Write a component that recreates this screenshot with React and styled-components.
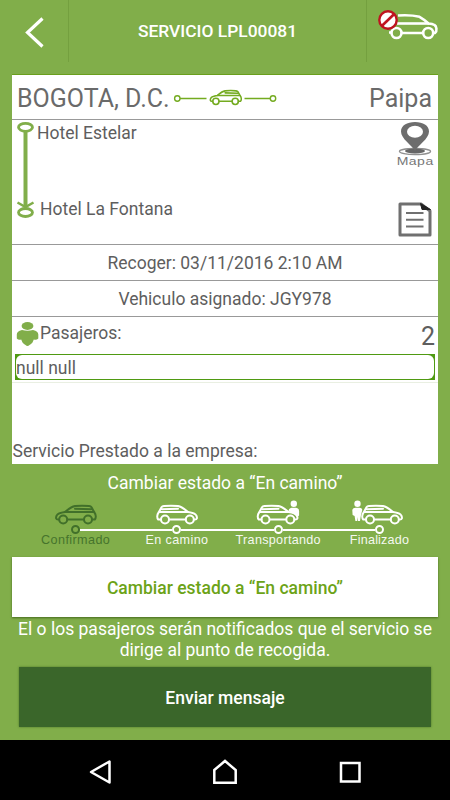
import React from "react";
import styled, { createGlobalStyle } from "styled-components";

const GlobalStyle = createGlobalStyle`
  * {
    box-sizing: border-box;
  }
  body {
    margin: 0;
    background-color: #81ae4a;
    font-family: Roboto, "Liberation Sans", sans-serif;
  }
  svg {
    display: block;
    overflow: visible;
    flex-shrink: 0;
  }
`;

const Container = styled.div`
  width: 450px;
  height: 800px;
  display: flex;
  flex-direction: column;
  background-color: #81ae4a;
  color: #5e5e5e;
  font-size: 17.5px;
  overflow: hidden;
`;
const Header = styled.header`
  height: 62px;
  display: flex;
  align-items: stretch;
`;
const HeaderSide = styled.div`
  width: ${(props) => props.$width}px;
  padding: ${(props) => props.$padding};
`;
const Title = styled.h1`
  flex: 1;
  margin: 0;
  border: solid #74a03f;
  border-width: 0 1px;
  line-height: 63px;
  text-align: center;
  font-size: 17.4px;
  font-weight: 500;
  color: #fff;
`;
const Card = styled.section`
  height: 389px;
  margin: 13px 12px 0;
  background-color: #fff;
  box-shadow: 0 -1px 0 #6a9f1c;
`;
const Cities = styled.div`
  height: 45px;
  display: flex;
  align-items: center;
  padding: 2px 6px 0 5px;
  border-bottom: 1px solid #999;
  font-size: 25px;
  color: #6a6a6a;
`;
const Origin = styled.span`
  width: 155px;
  white-space: nowrap;
`;
const Destination = styled.span`
  margin-left: auto;
`;
const Route = styled.div`
  height: 125px;
  display: flex;
  padding: 1px 4px 0 4px;
  border-bottom: 1px solid #999;
`;
const Stops = styled.div`
  flex: 1;
  height: 100px;
  display: flex;
  flex-direction: column;
  justify-content: space-between;
  padding-left: 3px;
  line-height: 24px;
`;
const Stop = styled.span`
  padding-left: ${(props) => props.$indent || 0}px;
`;
const Actions = styled.div`
  width: 38px;
  display: flex;
  flex-direction: column;
  align-items: center;
`;
const MapLabel = styled.span`
  height: 12px;
  margin-bottom: 35px;
  line-height: 13px;
  font-family: "Liberation Sans", Arial, sans-serif;
  font-size: 11.5px;
  letter-spacing: 0.4px;
  color: #777;
  transform: scaleX(1.22);
`;
const InfoRow = styled.div`
  height: 36px;
  line-height: 36px;
  border-bottom: 1px solid #999;
  text-align: center;
`;
const Passengers = styled.div`
  height: 36px;
  display: flex;
  align-items: center;
  padding: 0 3px 0 4px;
`;
const PassengersLabel = styled.span`
  padding-bottom: 4px;
`;
const Count = styled.span`
  margin-left: auto;
  padding-top: 2px;
  font-size: 25px;
`;
const PassengerFrame = styled.div`
  height: 26px;
  margin: 1px 3px 0;
  padding: 1px;
  background-color: #4f9a12;
`;
const Passenger = styled.div`
  height: 24px;
  border-radius: 6px;
  background-color: #fff;
  line-height: 26px;
`;
const Divider = styled.div`
  height: 3px;
  border-bottom: 1px solid #e9efe2;
`;
const Company = styled.div`
  padding: 56px 0 0 0.5px;
  line-height: 24px;
`;
const StatusTitle = styled.div`
  height: 37px;
  line-height: 38px;
  text-align: center;
  color: #fff;
`;
const Steps = styled.div`
  height: 56px;
  display: grid;
  grid-template-columns: repeat(4, 101.3px);
  margin-left: 25px;
`;
const Step = styled.div`
  display: flex;
  flex-direction: column;
  align-items: center;
  padding-top: 4px;
  color: ${(props) => (props.$current ? "#41702a" : "#fff")};
`;
const Rail = styled.div`
  width: 100%;
  height: 9px;
  display: flex;
  align-items: center;
`;
const Line = styled.span`
  flex: 1;
  height: 2px;
  background-color: ${(props) => (props.$hidden ? "transparent" : "#fff")};
`;
const Dot = styled.span`
  width: 9px;
  height: 9px;
  border: 2px solid currentColor;
  border-radius: 50%;
`;
const StepLabel = styled.span`
  line-height: 13px;
  white-space: nowrap;
  font-family: "Liberation Sans", Arial, sans-serif;
  font-size: 12.6px;
  letter-spacing: ${(props) => props.$spacing}px;
  opacity: 0.92;
`;
const ChangeButton = styled.button`
  height: 60px;
  margin: 0 12px;
  padding: 1px 0 0;
  border: none;
  background-color: #fff;
  box-shadow: 0 1px 2px rgba(30, 60, 0, 0.6);
  font-family: inherit;
  font-size: 17.5px;
  font-weight: 500;
  color: #6ca318;
`;
const Notice = styled.p`
  height: 50px;
  margin: 0;
  padding: 2px 12px 0;
  text-align: center;
  line-height: 20.5px;
  color: #fff;
`;
const SendButton = styled.button`
  height: 60px;
  margin: 0 19px 13px;
  padding: 1px 0 0;
  border: none;
  background-color: #3a662a;
  box-shadow: 0 0 2px rgba(40, 80, 20, 0.6);
  font-family: inherit;
  font-size: 17.5px;
  font-weight: 500;
  color: #fff;
`;
const NavBar = styled.nav`
  height: 60px;
  display: flex;
  justify-content: space-between;
  align-items: center;
  padding: 4px 88px 0;
  background-color: #000;
`;

// the car looks to the right, $flip turns it round
const CarShape = ({ flip, stroke = 2 }) => (
  <g
    transform={flip ? "translate(42 0) scale(-1 1)" : undefined}
    fill="none"
    stroke="currentColor"
    strokeWidth={stroke}
    strokeLinejoin="round"
    strokeLinecap="round"
  >
    <path d="M5 14.5H2.2C.8 13 .9 9.500 2.600 7.500L5.500 2.300Q6.200 1.300 8 1.100 15 .4 22 1.100C26 1.800 29 4.500 32 7 36 7.500 39.500 8.500 40.300 10.500 41.500 13 41 14.500 39 14.500H38" />
    <path d="M13.500 14.500H29.500M3.500 7H32M5.800 4.200L22 3.700" />
    <circle cx="9" cy="14.500" r="4" />
    <circle cx="33.800" cy="14.500" r="4" />
  </g>
);

const steps = [
  { label: "Confirmado", spacing: 0.4, flip: true, shift: 0 },
  { label: "En camino", spacing: 0.4, shift: 0 },
  { label: "Transportando", spacing: 0.3, shift: -0.5, person: "front" },
  { label: "Finalizado", spacing: 0.2, shift: 2, person: "back" },
];

const StepCar = ({ step }) => (
  <svg width="42" height="20" viewBox="0 0 42 20">
    <g transform={`translate(${step.shift} 0)`}>
      <CarShape flip={step.flip} />
      {step.person === "front" && (
        <g fill="currentColor">
          <circle cx="37.300" cy="-1.200" r="3.200" />
          <path d="M32 6Q32.500 3 35 2.700H39.500Q42.500 3 42.600 6V10.500L40.500 12 37 8.500Z" />
        </g>
      )}
      {step.person === "back" && (
        <g fill="currentColor">
          <circle cx="-3.500" cy="-1.200" r="3.200" />
          <path d="M-8.700 5Q-8 2.700-5.500 2.700H-1.500Q1 2.700 1.300 5L0 10-1 16H-3.200L-3.600 12-4 16H-5.600L-6.400 11-8.400 10Z" />
        </g>
      )}
    </g>
  </svg>
);

const App = () => {
  return (
    <>
      <GlobalStyle />
      <Container>
        <Header>
          <HeaderSide $width={68} $padding="17px 0 0 25px">
            <svg width="20" height="32" viewBox="0 0 20 32">
              <path d="M17.500 1.500L2.500 15.500L17.500 29.500" fill="none" stroke="#fff" strokeWidth="3.200" />
            </svg>
          </HeaderSide>
          <Title>SERVICIO LPL00081</Title>
          <HeaderSide $width={83} $padding="8px 0 0 10px">
            <svg width="62" height="34" viewBox="0 0 62 34">
              <g fill="none" stroke="#fff" strokeWidth="2.600" strokeLinejoin="round">
                <path d="M12 24.500H14.500M24.500 25H46M56 25H58C60.500 23 59.500 18 57.500 17Q55.500 15.800 51.500 15.500Q46.500 11 42.500 8.800Q34 6.700 21 7.500" />
                <path d="M20 15.500H52" />
                <circle cx="19.500" cy="25" r="5" />
                <circle cx="51.200" cy="25" r="5" />
              </g>
              <circle cx="11" cy="12" r="8.700" fill="#fff" stroke="#bf1420" strokeWidth="2.400" />
              <path d="M5 17.700L17 6.300" stroke="#bf1420" strokeWidth="2.600" />
            </svg>
          </HeaderSide>
        </Header>

        <Card>
          <Cities>
            <Origin>BOGOTA, D.C.</Origin>
            <svg width="106" height="20" viewBox="0 0 106 20" color="#74ab20">
              <g fill="none" stroke="#74ab20" strokeWidth="1.400">
                <circle cx="5.300" cy="10.500" r="2.700" />
                <path d="M8 10.500H34.500M72.500 10.500H98" />
                <circle cx="101" cy="10.500" r="2.700" />
              </g>
              <g transform="translate(37.500 2) scale(.78)">
                <CarShape flip />
              </g>
            </svg>
            <Destination>Paipa</Destination>
          </Cities>
          <Route>
            <svg width="18" height="98" viewBox="0 0 18 98" fill="none" stroke="#81ae4a">
              <ellipse cx="9.500" cy="6.300" rx="7" ry="4" strokeWidth="2.800" />
              <path d="M9.500 10.500V86" strokeWidth="4" />
              <path d="M1.500 81.500L9.500 86L17.500 81.500" strokeWidth="2.500" />
              <ellipse cx="9.500" cy="91.500" rx="7" ry="4" strokeWidth="2.800" />
            </svg>
            <Stops>
              <Stop>Hotel Estelar</Stop>
              <Stop $indent={3}>Hotel La Fontana</Stop>
            </Stops>
            <Actions>
              <svg width="36" height="34" viewBox="0 0 36 34">
                <ellipse cx="18" cy="30.500" rx="15.500" ry="3" fill="none" stroke="#909090" strokeWidth="1.400" />
                <ellipse cx="18" cy="30" rx="10" ry="2.500" fill="#666" />
                <path
                  d="M18 30C15 24 4 18 4 10.500C4 4.500 10 1 18 1S32 4.500 32 10.500C32 18 21 24 18 30Z"
                  fill="#6d6d6d"
                />
                <ellipse cx="18" cy="10.700" rx="8" ry="6" fill="#fff" />
              </svg>
              <MapLabel>Mapa</MapLabel>
              <svg width="34" height="36" viewBox="0 0 34 36">
                <path d="M2 2H23L32 9V33H2Z" fill="#fff" stroke="#707070" strokeWidth="3" strokeLinejoin="round" />
                <path d="M22.500 1.500L32.500 7.500H24Z" fill="#222" stroke="#222" />
                <path d="M8 11H25.500M8 17.700H25.500M8 24.500H25.500" stroke="#707070" strokeWidth="2" />
              </svg>
            </Actions>
          </Route>
          <InfoRow>Recoger: 03/11/2016 2:10 AM</InfoRow>
          <InfoRow>Vehiculo asignado: JGY978</InfoRow>
          <Passengers>
            <svg width="24" height="28" viewBox="0 0 24 28" fill="#81ae4a">
              <ellipse cx="11.500" cy="5" rx="5.900" ry="3.900" />
              <path d="M6 9Q11.500 10.500 17 9Q22.300 10 22.300 13.500V17.500Q20.500 19.500 17.800 18.500L16.500 21.500Q15 23 13.500 24 11.500 26 9.500 24 8 23 6.500 21.500L5.200 18.500Q2.500 19.500.8 17.500V13.500Q.8 10 6 9Z" />
            </svg>
            <PassengersLabel>Pasajeros:</PassengersLabel>
            <Count>2</Count>
          </Passengers>
          <PassengerFrame>
            <Passenger>null null</Passenger>
          </PassengerFrame>
          <Divider />
          <Company>Servicio Prestado a la empresa:</Company>
        </Card>

        <StatusTitle>Cambiar estado a “En camino”</StatusTitle>
        <Steps>
          {steps.map((step, i) => (
            <Step key={step.label} $current={i === 0}>
              <StepCar step={step} />
              <Rail>
                <Line $hidden={i === 0} />
                <Dot />
                <Line $hidden={i === steps.length - 1} />
              </Rail>
              <StepLabel $spacing={step.spacing}>{step.label}</StepLabel>
            </Step>
          ))}
        </Steps>
        <ChangeButton>Cambiar estado a “En camino”</ChangeButton>
        <Notice>
          El o los pasajeros serán notificados que el servicio se dirige al punto de recogida.
        </Notice>
        <SendButton>Enviar mensaje</SendButton>

        <NavBar>
          <svg width="24" height="26" viewBox="0 0 24 26">
            <path d="M21.500 2.500V23.500L3 13Z" fill="none" stroke="#fff" strokeWidth="2.500" strokeLinejoin="round" />
          </svg>
          <svg width="26" height="26" viewBox="0 0 26 26">
            <path d="M2.300 11L13 2L23.700 11V23.800H2.300Z" fill="none" stroke="#fff" strokeWidth="2.500" />
          </svg>
          <svg width="24" height="24" viewBox="0 0 24 24">
            <path d="M3 3H21.500V21.500H3Z" fill="none" stroke="#fff" strokeWidth="2.500" />
          </svg>
        </NavBar>
      </Container>
    </>
  );
};

export default App;
